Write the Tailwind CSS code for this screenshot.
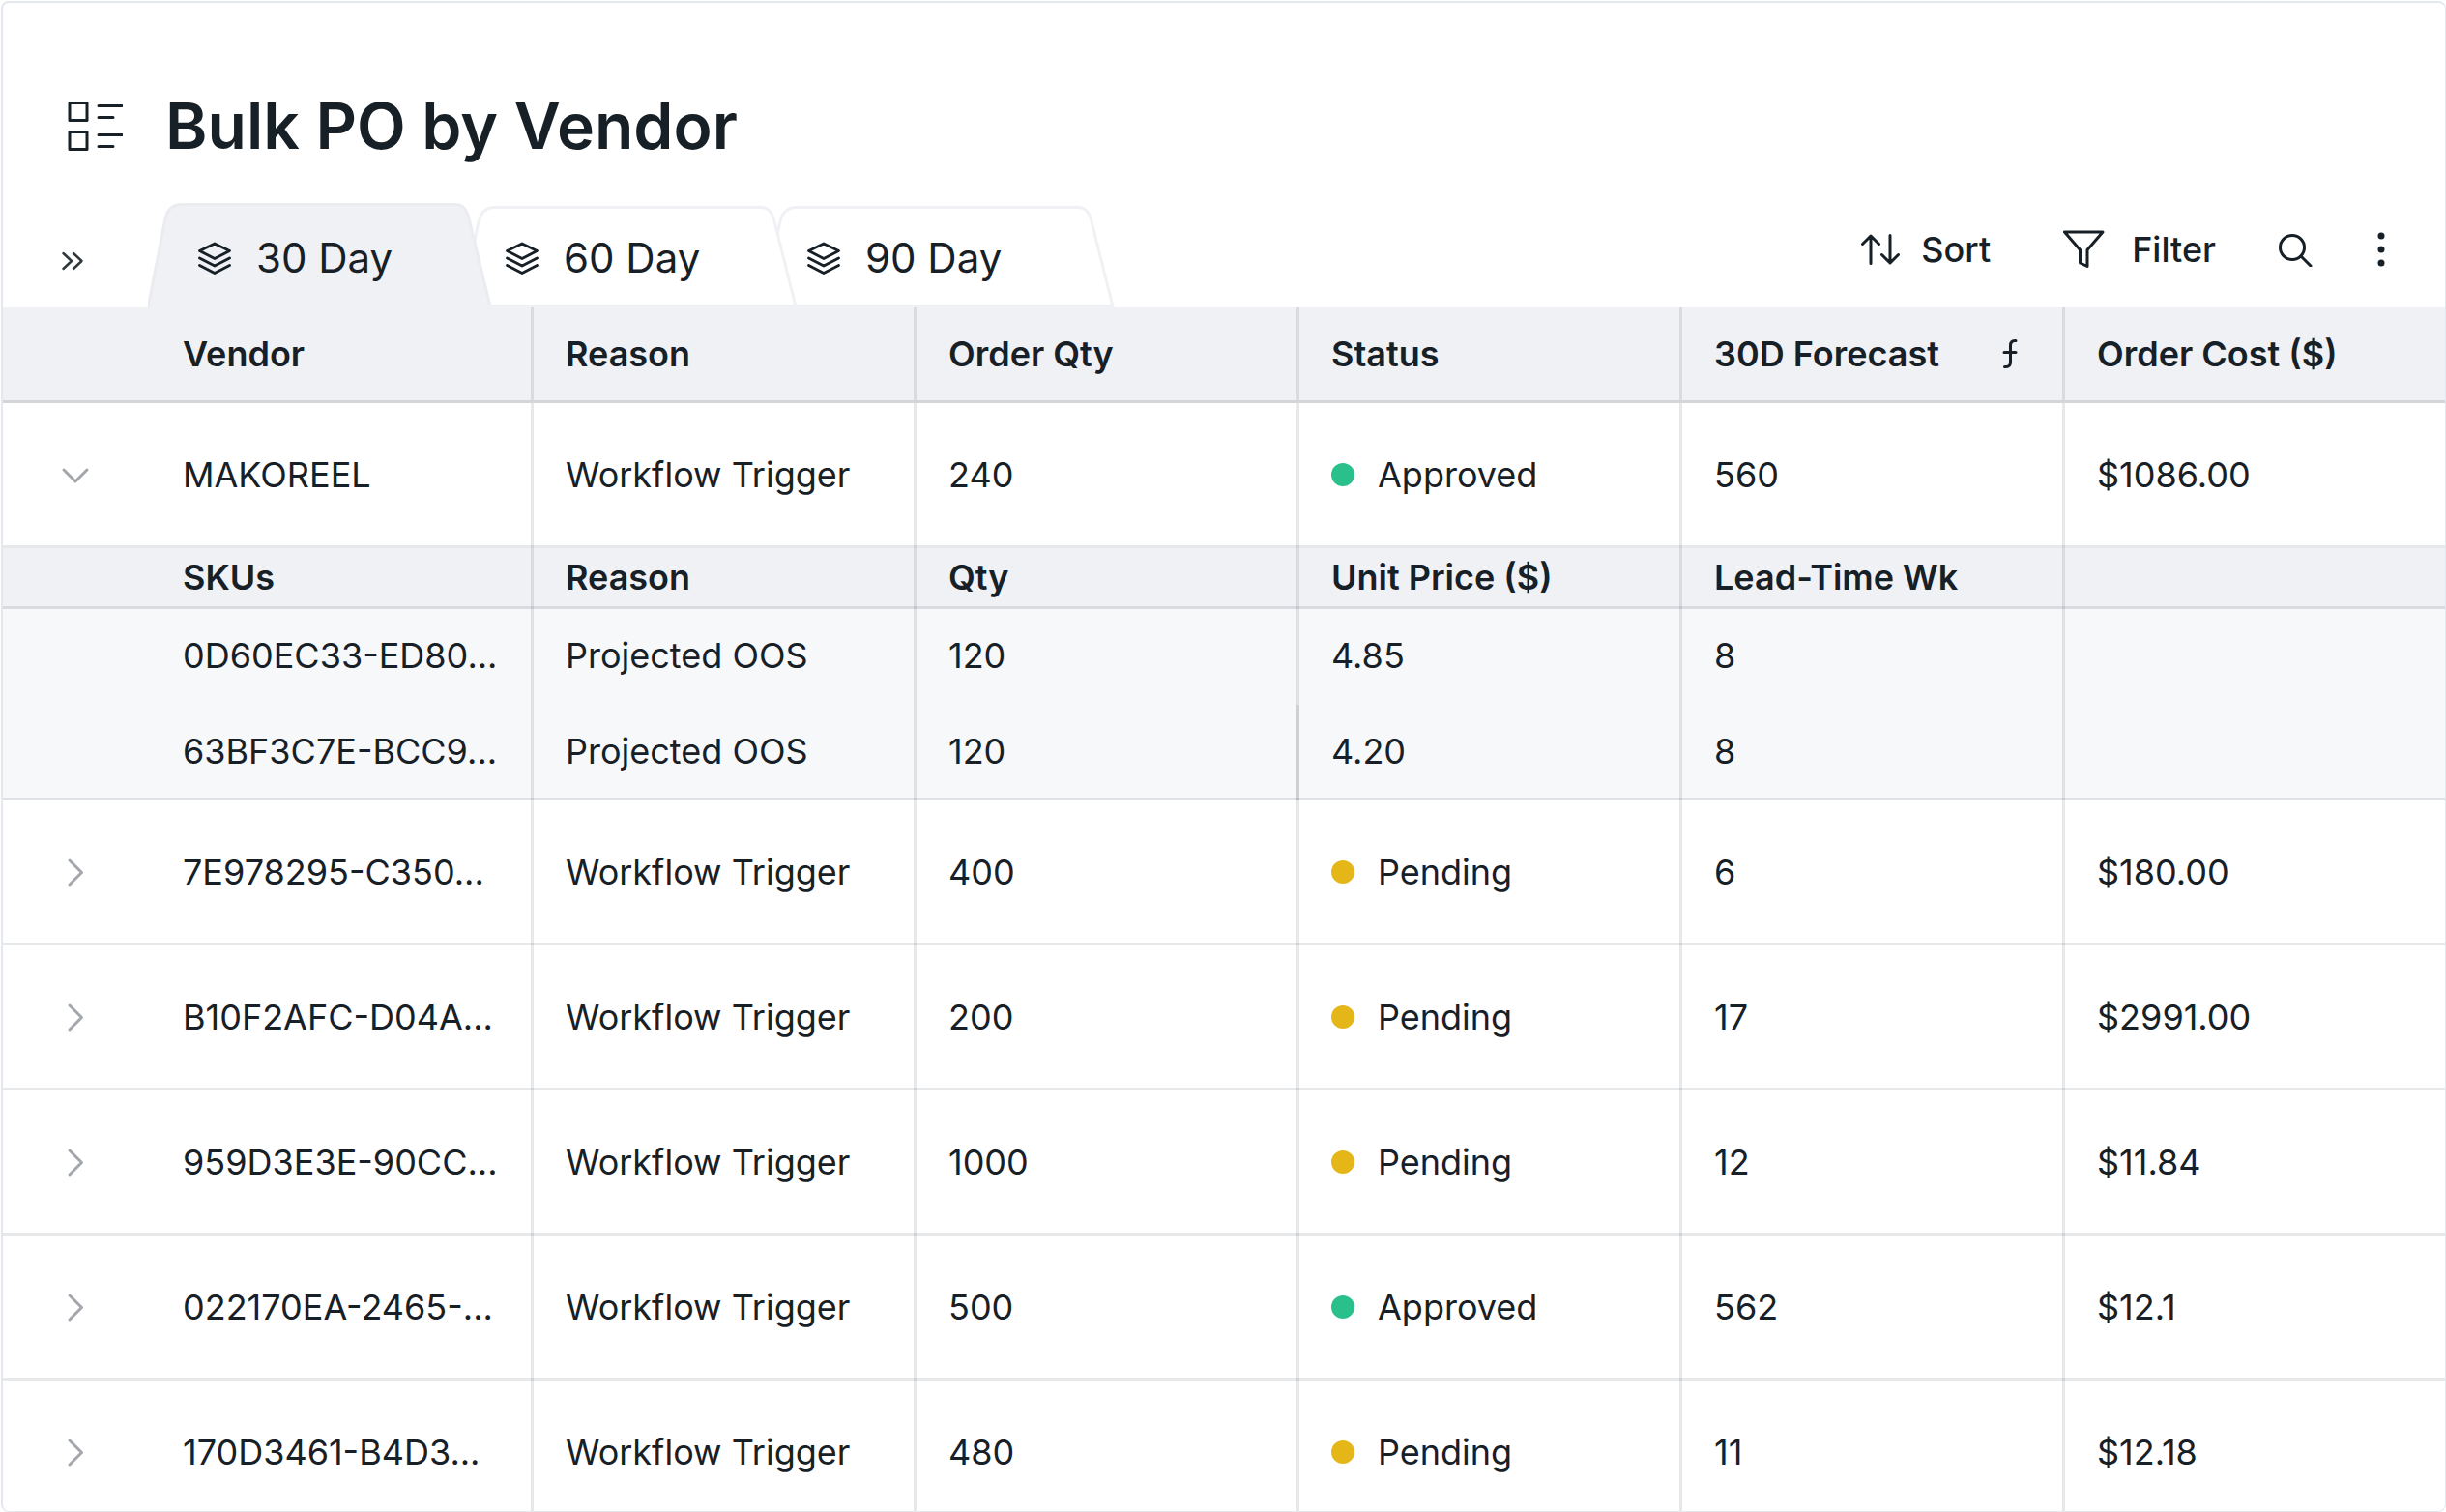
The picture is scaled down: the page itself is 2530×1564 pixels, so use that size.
<!DOCTYPE html>
<html lang="en">
<head>
    <meta charset="UTF-8">
    <meta name="viewport" content="width=device-width, initial-scale=1.0">
    <title>Bulk PO by Vendor</title>
    <script src="https://cdn.jsdelivr.net/npm/@tailwindcss/browser@4"></script>
</head>
<body class="bg-white font-['Inter',sans-serif] text-[#172026]">
    <div class="h-screen pt-px pl-px">
        <main class="h-full overflow-hidden rounded-lg border-t-2 border-r border-b border-l-2 border-[#e2e8ee] bg-white">
            <!-- Title -->
            <header class="flex items-center gap-11 px-16 pt-[87px]">
                <svg class="h-[60px] w-[60px]" viewBox="0 0 60 60" fill="none" stroke="currentColor" stroke-width="3" stroke-linejoin="round" stroke-linecap="round">
                    <path d="M5 6.500h18v18H5zM5 36.500h18v18H5z"/>
                    <path d="M35 9.500h24M35 21.500h15M35 39.500h24M35 51.500h15"/>
                </svg>
                <h1 class="text-[66px] leading-[80px] font-semibold">Bulk PO by Vendor</h1>
            </header>

            <!-- Tabs and table tools -->
            <div class="mt-10 flex h-[108px] justify-between">
                <nav class="flex">
                    <button class="flex w-[150px] items-center pt-3 pl-[60px]" aria-label="Expand views">
                        <svg class="h-6 w-6" viewBox="0 0 24 24" fill="none" stroke="#2e373c" stroke-width="2.500" stroke-linecap="round" stroke-linejoin="round">
                            <path d="M2.500 4l8.500 8-8.500 8M13 4l8.500 8-8.500 8"/>
                        </svg>
                    </button>
                    <div id="tabs" class="isolate flex"></div>
                </nav>
                <div class="flex h-[95px] items-center gap-16 pr-[59px] text-[36px] leading-[44px] font-medium">
                    <button class="mr-2.5 flex items-center gap-[22px]">
                        <svg class="h-8 w-10" viewBox="0 0 40 32" fill="none" stroke="currentColor" stroke-width="3" stroke-linecap="round" stroke-linejoin="round">
                            <path d="M10 30.500V2M1.500 10.500L10 2l8.500 8.500M30 1.500V30M21.500 21.500L30 30l8.500-8.500"/>
                        </svg>
                        Sort
                    </button>
                    <button class="flex items-center gap-7">
                        <svg class="h-10 w-11" viewBox="0 0 44 40" fill="none" stroke="currentColor" stroke-width="3" stroke-linejoin="round">
                            <path d="M2.500 2H42L26 20.500V37.500L18.500 34V20.500z"/>
                        </svg>
                        Filter
                    </button>
                    <button aria-label="Search">
                        <svg class="h-9 w-9" viewBox="0 0 36 36" fill="none" stroke="currentColor" stroke-width="3" stroke-linecap="round">
                            <circle cx="15" cy="16" r="12.500"/>
                            <path d="M24 25l10 10"/>
                        </svg>
                    </button>
                    <button aria-label="More">
                        <svg class="h-9 w-3.5" viewBox="0 0 14 36" fill="currentColor">
                            <circle cx="7" cy="4" r="3.500"/>
                            <circle cx="7" cy="18" r="3.500"/>
                            <circle cx="7" cy="32" r="3.500"/>
                        </svg>
                    </button>
                </div>
            </div>

            <table class="w-full table-fixed text-left text-[36px] leading-[44px]">
                <colgroup>
                    <col class="w-[150px]">
                    <col><col><col><col><col><col>
                </colgroup>
                <thead class="bg-[#f0f1f5]">
                    <tr id="head"></tr>
                </thead>
                <tbody id="rows"></tbody>
            </table>
        </main>
    </div>

    <script>
        const tabs = [
            { name: '30 Day', width: 356, top: 0, box: 'z-20 w-[356px] pl-[52px]', fill: '#f0f1f5', stroke: '#ebecf0' },
            { name: '60 Day', width: 348, top: 3, box: 'z-10 -ml-8 w-[348px] pl-[46px]', fill: '#fff', stroke: '#f0f1f5' },
            { name: '90 Day', width: 364, top: 3, box: '-ml-9 w-[364px] pl-[46px]', fill: '#fff', stroke: '#f0f1f5' }
        ];

        const columns = ['Vendor', 'Reason', 'Order Qty', 'Status', '30D Forecast', 'Order Cost ($)'];
        const skuColumns = ['SKUs', 'Reason', 'Qty', 'Unit Price ($)', 'Lead-Time Wk', ''];
        const skus = [
            ['0D60EC33-ED80...', 'Projected OOS', '120', '4.85', '8', ''],
            ['63BF3C7E-BCC9...', 'Projected OOS', '120', '4.20', '8', '']
        ];
        const orders = [
            ['MAKOREEL', 'Workflow Trigger', '240', 'Approved', '560', '$1086.00'],
            ['7E978295-C350...', 'Workflow Trigger', '400', 'Pending', '6', '$180.00'],
            ['B10F2AFC-D04A...', 'Workflow Trigger', '200', 'Pending', '17', '$2991.00'],
            ['959D3E3E-90CC...', 'Workflow Trigger', '1000', 'Pending', '12', '$11.84'],
            ['022170EA-2465-...', 'Workflow Trigger', '500', 'Approved', '562', '$12.1'],
            ['170D3461-B4D3...', 'Workflow Trigger', '480', 'Pending', '11', '$12.18']
        ];

        // Grid lines are translucent inset shadows so that they darken where they cross
        const left = 'shadow-[inset_3px_0_#1720261a]';
        const bottom = 'shadow-[inset_0_-3px_#1720261a]';
        const both = 'shadow-[inset_3px_0_#1720261a,inset_0_-3px_#1720261a]';
        const headLine = 'shadow-[inset_0_-3px_#d4d5d8]';
        const headBoth = 'shadow-[inset_0_-3px_#d4d5d8,inset_3px_0_#1720261a]';
        const strong = 'shadow-[inset_3px_0_#1720262e,inset_0_-3px_#1720261a]';

        const fnIcon = `
            <svg class="h-8 w-4" viewBox="0 0 16 32" fill="none" stroke="currentColor" stroke-width="3" stroke-linecap="round">
                <path d="M14 2.500h-1Q8.500 2.500 8.500 7.500V24.500Q8.500 29.500 4 29.500H2.500M2 14.500h12"/>
            </svg>`;

        document.getElementById('tabs').innerHTML = tabs.map(({ name, width: w, top, box, fill, stroke }) => `
            <button class="relative flex items-center gap-[26px] pt-1.5 text-[42px] leading-[52px] ${box}">
                <svg class="absolute inset-0 -z-10 h-full w-full" viewBox="0 0 ${w} 108" fill="none">
                    <path d="M0 109L18 ${top + 16}Q21.500 ${top + 1.5} 35 ${top + 1.5}H${w - 38}Q${w - 27} ${top + 1.5} ${w - 24} ${top + 16}L${w - 1.5} 109" fill="${fill}" stroke="${stroke}" stroke-width="3"/>
                    <path d="M4 105H${w - 1}V108H4z" fill="#f0f1f5"/>
                </svg>
                <svg class="h-[34px] w-[34px]" viewBox="0 0 34 34" fill="none" stroke="currentColor" stroke-width="2.800" stroke-linecap="round" stroke-linejoin="round">
                    <path d="M17 2L32.500 9.500L17 17.500L1.500 9.500zM1.500 17L17 25L32.500 17M1.500 24.500L17 32.500L32.500 24.500"/>
                </svg>
                ${name}
            </button>
        `).join('');

        document.getElementById('head').innerHTML = `<td class="${headLine}"></td>` + columns.map((c, i) => `
            <th class="h-[99px] px-9 pb-1 font-semibold whitespace-nowrap ${i ? headBoth : headLine}">
                ${c === '30D Forecast' ? `<div class="flex items-center justify-between pr-2.5">${c}${fnIcon}</div>` : c}
            </th>
        `).join('');

        const statusCell = (s) => `
            <div class="flex items-center gap-6">
                <span class="size-6 rounded-full ${s === 'Approved' ? 'bg-[#2ac08b]' : 'bg-[#e5b617]'}"></span>${s}
            </div>`;

        const orderRow = (order, open) => `
            <tr>
                <td class="h-[150px] pb-[3px] ${bottom}">
                    <button class="mx-auto block" aria-label="Toggle SKUs" aria-expanded="${open}">
                        <svg class="size-8" viewBox="0 0 32 32" fill="none" stroke="#a3a6aa" stroke-width="3" stroke-linecap="round" stroke-linejoin="round">
                            <path d="${open ? 'M4 11l12 12 12-12' : 'M10 4l12.500 12.500L10 29'}"/>
                        </svg>
                    </button>
                </td>
                ${order.map((c, i) => `<td class="pl-9 pb-[3px] whitespace-nowrap ${i ? both : bottom}">${i === 3 ? statusCell(c) : c}</td>`).join('')}
            </tr>`;

        const skuTable = `
            <tr class="bg-[#f0f1f5]">
                <td class="${bottom}"></td>
                ${skuColumns.map((c, i) => `<th class="h-[63px] px-9 pb-[3px] font-semibold ${i ? both : bottom}">${c}</th>`).join('')}
            </tr>
            ${skus.map((sku, r) => {
                const last = r === skus.length - 1;
                return `
                <tr class="bg-[#f7f8fa]">
                    <td class="${last ? bottom : ''}"></td>
                    ${sku.map((c, i) => `<td class="h-[99px] pl-9 pb-[3px] whitespace-nowrap ${last ? (i === 3 ? strong : i ? both : bottom) : i ? left : ''}">${c}</td>`).join('')}
                </tr>`;
            }).join('')}`;

        document.getElementById('rows').innerHTML = orders.map((order, r) => orderRow(order, r === 0) + (r === 0 ? skuTable : '')).join('');
    </script>
</body>
</html>
